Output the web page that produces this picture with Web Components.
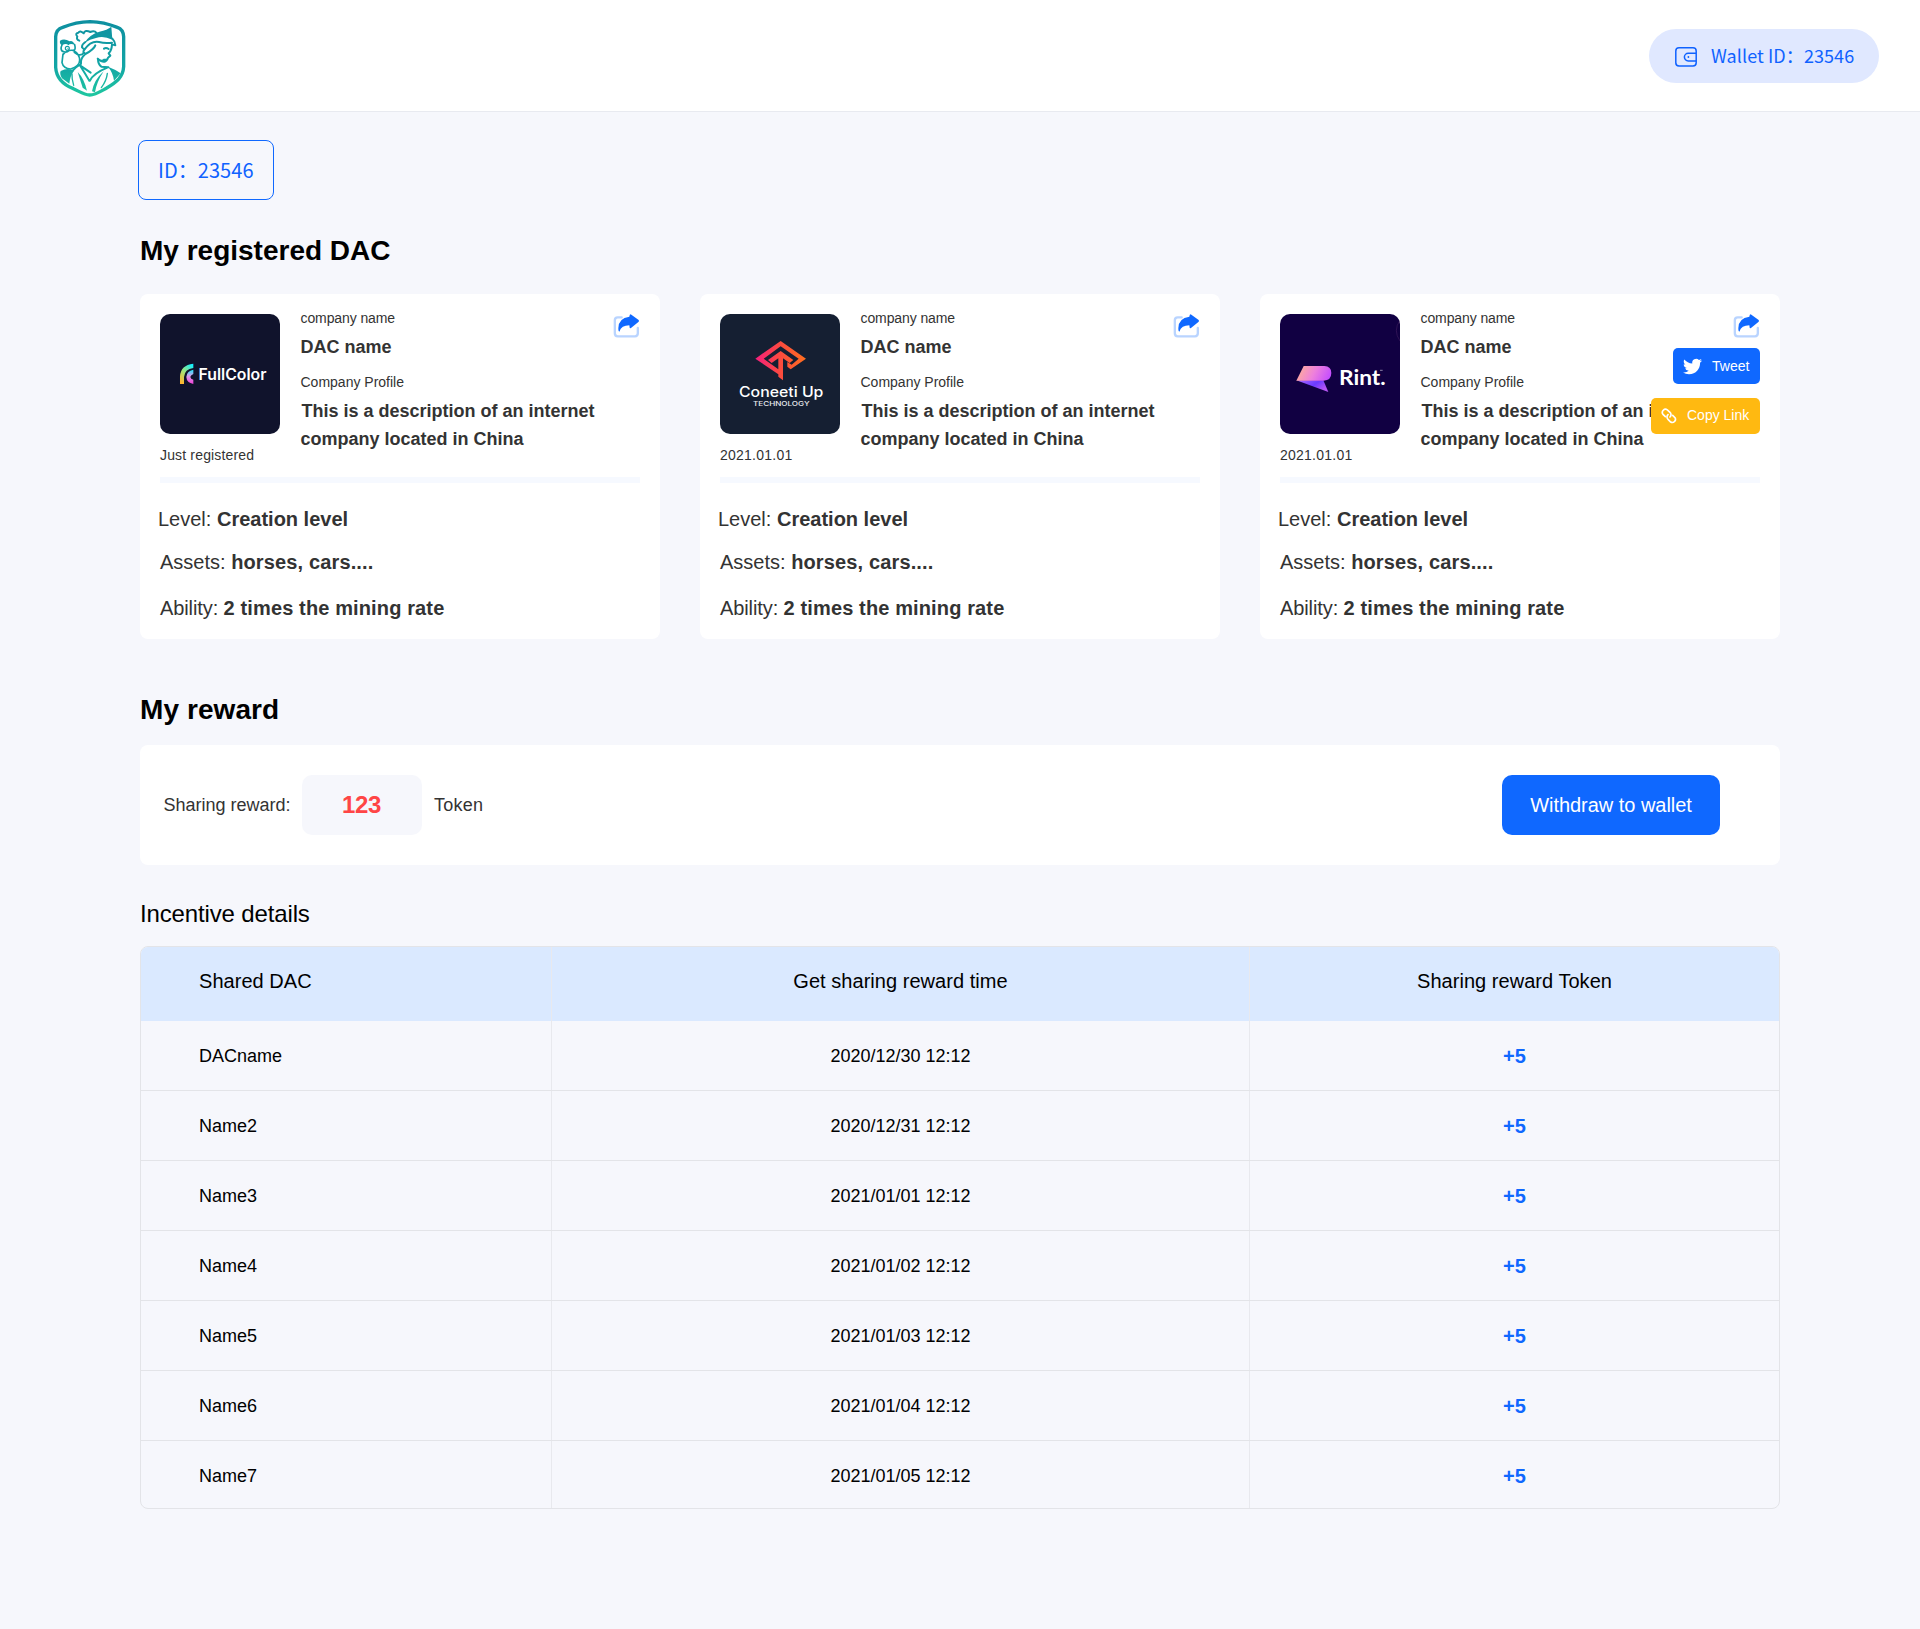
<!DOCTYPE html>
<html lang="en">
<head>
<meta charset="utf-8">
<title>DAC dashboard</title>
<style>
html,body{margin:0;background:#f6f7fc}
body{font-family:"Liberation Sans",Arial,sans-serif;color:#000;min-height:1629px}
</style>
</head>
<body>
<dac-app></dac-app>
<script>
function define(name, html, setup) {
  const t = document.createElement('template');
  customElements.define(name, class extends HTMLElement {
    connectedCallback() {
      if (this.shadowRoot) return;
      t.innerHTML = html;
      this.attachShadow({ mode: 'open' }).appendChild(t.content.cloneNode(true));
      if (setup) setup(this, this.shadowRoot);
    }
  });
}

define('crest-logo', `<style>:host{display:block;width:100px;height:95px}svg{display:block}</style>
<svg width="100" height="95" viewBox="0 0 300 285" fill="none" stroke="url(#g)" stroke-linejoin="round" stroke-linecap="round">
<defs><linearGradient id="g" gradientUnits="userSpaceOnUse" x1="150" y1="30" x2="150" y2="260"><stop offset="0" stop-color="#0e8fa0"/><stop offset=".6" stop-color="#12a5a5"/><stop offset="1" stop-color="#1fc8a0"/></linearGradient></defs>
<path stroke-width="10" d="M150 35Q108 36 68 52Q48 58 47 80V172C49 205 70 224 100 236C118 244 132 255 149 255C166 255 182 244 200 234C230 216 249 202 251 170V80Q250 58 232 52Q192 36 150 35Z"/>
<g stroke="none" fill="url(#g)">
<path d="M134 98Q148 74 178 65Q202 60 214 50L217 89Q190 76 168 84Q150 88 134 98Z"/>
<path d="M62 183Q84 172 102 182Q90 198 88 221L66 205Q58 192 62 183Z"/>
<path d="M204 170Q226 178 242 190L222 212Q219 188 204 170Z"/>
<path d="M60 92Q73 84 89 94Q98 90 105 105Q91 99 85 106Q79 98 66 106Q58 101 60 92Z"/>
<path d="M204 146Q196 160 188 156L172 146Q187 152 191 146Z"/>
<path d="M113 186Q132 205 141 242L128 233Z"/><path d="M156 244Q162 210 191 184Q170 216 165 247Z"/>
</g>
<path stroke-width="6" d="M136 96Q125 103 126 112L133 119Q153 91 177 96Q195 101 216 98M217 86Q226 95 226 106L216 103Q215 122 206 130L211 137L204 143Q201 153 194 155Q180 155 173 146M170 69Q163 60 151 66Q135 58 131 70Q120 60 115 68Q104 70 112 80Q108 88 118 92"/>
<path stroke-width="6" d="M133 119Q126 128 136 132Q162 118 166 106M136 132Q120 146 123 162Q106 172 98 182M174 148Q174 163 184 170L205 172M121 167L152 188M150 212Q160 190 202 173M121 168Q135 190 148 212M192 116Q198 112 206 117"/>
<path stroke-width="5" d="M66 105Q60 117 67 124M69 132L66 158Q70 176 92 177Q119 169 119 151Q119 132 99 121Q80 119 69 134M104 104Q108 119 101 121M67 123Q78 130 88 121M103 127Q120 142 133 128"/>
<circle cx="82" cy="115" r="6" stroke-width="3.500"/><circle cx="83" cy="115" r="1"/>
<path stroke-width="4" d="M202 190Q200 211 184 233M96 192Q95 206 101 226"/>
</svg>`);

define('wallet-pill', `<style>
:host{display:flex;box-sizing:border-box;width:230px;height:54px;border-radius:27px;background:#e0e8ff;color:#0f62ff;padding-left:26px;align-items:center;gap:14px;font:18px "Noto Sans CJK SC",sans-serif}
span{line-height:26px;padding-bottom:2px;white-space:nowrap;letter-spacing:.08px}svg{display:block;margin-top:1px}</style>
<svg width="22" height="20" viewBox="0 0 22 20" fill="none" stroke="currentColor" stroke-width="1.5"><rect x=".8" y=".8" width="20.4" height="18.2" rx="3.2"/><path d="M21 6.3H13.2a3.8 3.8 0 0 0 0 7.6H21"/><circle cx="13.4" cy="10" r=".9" fill="currentColor" stroke="none"/></svg>
<span><slot></slot></span>`);

define('app-header', `<style>:host{display:flex;box-sizing:border-box;height:112px;background:#fff;border-bottom:1px solid #e8eaf0;padding:10px 41px 0 40px;justify-content:space-between}
wallet-pill{margin-top:19px}</style><crest-logo></crest-logo><wallet-pill>Wallet ID：23546</wallet-pill>`);

define('id-badge', `<style>:host{display:flex;box-sizing:border-box;width:136px;height:60px;border:1px solid #0f68ff;border-radius:8px;align-items:center;padding:0 0 1px 19px;color:#0f62ff;font:20px/29px "Noto Sans CJK SC",sans-serif;letter-spacing:.06px;white-space:nowrap}</style><slot></slot>`);

const logos = {
full: `<rect width="120" height="120" rx="10" fill="#10132c"/>
<defs><linearGradient id="a" x1=".8" y1="0" x2=".2" y2="1"><stop offset="0" stop-color="#14f0ff"/><stop offset=".5" stop-color="#a2e57a"/><stop offset="1" stop-color="#ffb52e"/></linearGradient><linearGradient id="b" x1=".5" y1="0" x2=".5" y2="1"><stop offset="0" stop-color="#19eaff"/><stop offset=".45" stop-color="#d99ae8"/><stop offset="1" stop-color="#f03fd8"/></linearGradient></defs>
<g transform="scale(.3333) translate(-30 -27)"><path fill="url(#a)" d="M90 237V214Q92 180 130 176V189Q104 192 102 216V237Z"/><path fill="url(#b)" d="M130 194V207Q121 211 121 216Q122 222 130 224V237Q110 233 109 216Q110 198 130 194Z"/></g>
<text x="38.5" y="65.6" font-family="Inter" font-weight="600" font-size="15.4" textLength="68" lengthAdjust="spacingAndGlyphs" fill="#fff">FullColor</text>`,
coneeti: `<rect width="120" height="120" rx="10" fill="#151f32"/>
<defs><linearGradient id="c" gradientUnits="userSpaceOnUse" x1="136" y1="165" x2="288" y2="165"><stop offset="0" stop-color="#f51f7d"/><stop offset=".5" stop-color="#fb4b3e"/><stop offset="1" stop-color="#ff6f1f"/></linearGradient></defs>
<g transform="scale(.3333) translate(-30 -27)" fill="url(#c)"><path d="M136 161L212 108L288 161L242 193L232 185V171L245 179L266 161L212 124L161 161L205 193V160L185 174L174 165L212 138L250 165L239 174L219 160V226L205 215V208Z"/></g>
<text x="19" y="82.6" font-family="Inter" font-weight="500" font-size="14" textLength="84.4" lengthAdjust="spacingAndGlyphs" fill="#fff">Coneeti Up</text>
<text x="33" y="92.3" font-family="Inter" font-weight="500" font-size="6.3" textLength="56.6" lengthAdjust="spacingAndGlyphs" fill="#e8eaee">TECHNOLOGY</text>`,
rint: `<rect width="120" height="120" rx="10" fill="#110042"/>
<defs><linearGradient id="d" x1="0" y1=".4" x2="1" y2=".6"><stop offset="0" stop-color="#ffae98"/><stop offset=".5" stop-color="#ee80dc"/><stop offset="1" stop-color="#c44dff"/></linearGradient><linearGradient id="e" x1="0" y1="0" x2="1" y2=".5"><stop offset="0" stop-color="#b26cff"/><stop offset=".6" stop-color="#6a3bff"/><stop offset="1" stop-color="#b856f5"/></linearGradient></defs>
<g transform="scale(.3333) translate(-30 -27)"><path fill="url(#e)" d="M79 226H160L175 261Z"/><path fill="url(#d)" d="M101 183H163Q184 184 184 204Q184 226 161 227H79Z"/><path d="M390 46Q368 76 390 108" fill="none" stroke="#4c2468" stroke-width="1.5"/><path d="M330 196H338" stroke="#8d82a8" stroke-width="3"/></g>
<text x="59" y="71" font-family="Lato" font-weight="700" font-size="20.8" textLength="46.6" lengthAdjust="spacingAndGlyphs" fill="#fff">Rint.</text>`};
define('brand-tile', `<style>:host{display:block;width:120px;height:120px}svg{display:block}text{font-variant-ligatures:none}</style><svg width="120" height="120" viewBox="0 0 120 120"></svg>`,
 (el, r) => { r.querySelector('svg').innerHTML = logos[el.getAttribute('brand')]; });

define('share-icon', `<style>:host{display:block}svg{display:block}</style><svg width="26" height="24" viewBox="400 87 78 72"><path d="M426 97H414Q405.500 97 405.500 106V145Q405.500 154 414 154H466Q474.500 154 474.500 145V129" fill="none" stroke="#b9d4ff" stroke-width="7" stroke-linecap="round"/><path d="M453 88Q450 88 449 95Q416 99 416 130Q416 140 419 140Q425 121 449 121Q449 130 453 130L477 110Q479 107 476 104Z" fill="#0f68ff"/></svg>`);

define('share-button', `<style>:host{display:flex;box-sizing:border-box;height:36px;border-radius:5px;background:var(--bg);color:#fff;font-size:14px;line-height:16px;align-items:center;padding-left:10px;gap:10px;white-space:nowrap}
:host([kind=copy]) span{padding-bottom:2px}
svg{display:block;flex:none}span{display:block}</style><svg></svg><span><slot></slot></span>`, (el, r) => {
  const s = r.querySelector('svg');
  if (el.getAttribute('kind') === 'tweet') {
    s.setAttribute('viewBox', '0 0 24 24'); s.setAttribute('width', 19); s.setAttribute('height', 19);
    s.innerHTML = '<path fill="#fff" d="M23.95 4.57a10 10 0 0 1-2.82.77 4.96 4.96 0 0 0 2.16-2.72c-.95.55-2 .96-3.13 1.18a4.92 4.92 0 0 0-8.38 4.48C7.69 8.1 4.07 6.13 1.64 3.16a4.82 4.82 0 0 0-.67 2.48c0 1.71.87 3.21 2.19 4.1a4.9 4.9 0 0 1-2.23-.62v.06a4.92 4.92 0 0 0 3.95 4.83 5 5 0 0 1-2.21.08 4.94 4.94 0 0 0 4.6 3.42A9.87 9.87 0 0 1 0 19.54a13.99 13.99 0 0 0 7.55 2.21c9.05 0 14-7.5 14-13.98 0-.21 0-.42-.02-.63a9.94 9.94 0 0 0 2.46-2.55z"/>';
  } else {
    s.setAttribute('viewBox', '0 0 48 48'); s.setAttribute('width', 16); s.setAttribute('height', 16);
    s.innerHTML = '<g fill="none" stroke="#fff" stroke-width="5" stroke-linecap="round"><path d="M13 26L6 19A9.500 9.500 0 0 1 19 5.500L27 13A9.500 9.500 0 0 1 27 27"/><path d="M21 20A9.500 9.500 0 0 0 21 34L29 42A9.500 9.500 0 0 0 42 29L35 22"/></g>';
  }
});

define('share-menu', `<style>:host{display:flex;flex-direction:column;align-items:flex-end;gap:14px}
.t{--bg:#0f68ff;width:87px}.c{--bg:#ffb911;width:109px}</style>
<share-button class="t" kind="tweet">Tweet</share-button><share-button class="c" kind="copy">Copy Link</share-button>`);

define('dac-card', `<style>
:host{display:block;box-sizing:border-box;position:relative;width:520px;height:344.500px;background:#fff;border-radius:8px;padding:20px;color:#333}
.head{display:flex;gap:20px;height:163px}
.date{font-size:14px;line-height:20px;margin-top:11px;white-space:nowrap;letter-spacing:.16px}
:host([date^="2"]) .date{letter-spacing:.24px}
.info{flex:1;min-width:0;margin-top:-4px;padding-left:.5px}
.s{font-size:14px;line-height:16px}.cn{letter-spacing:-.1px}.n{font-size:18px;line-height:20px;font-weight:700;margin:11px 0 17px}
.d{font-size:18px;line-height:28px;font-weight:700;margin-top:7px;width:300px;text-indent:1px}
.div{height:6px;background:#f6f9ff}
.row{font-size:20px;line-height:22px}.l{margin:25px 0 0 -2px}.a{margin-top:21px}.b{margin-top:24px;letter-spacing:-.1px}
.a b{letter-spacing:.14px}.b b{letter-spacing:.13px}
share-icon{margin:0 .8px 0 auto;align-self:flex-start}
share-menu{position:absolute;right:20px;top:54px}
</style>
<div class="head"><div><brand-tile></brand-tile><div class="date"></div></div>
<div class="info"><div class="s cn">company name</div><div class="n">DAC name</div><div class="s">Company Profile</div><div class="d">This is a description of an internet company located in China</div></div><share-icon></share-icon></div>
<div class="div"></div>
<div class="row l">Level: <b>Creation level</b></div><div class="row a">Assets: <b>horses, cars....</b></div><div class="row b">Ability: <b>2 times the mining rate</b></div><slot></slot>`,
(el, r) => {
  r.querySelector('.date').textContent = el.getAttribute('date');
  const t = document.createElement('brand-tile'); t.setAttribute('brand', el.getAttribute('brand'));
  r.querySelector('brand-tile').replaceWith(t);
  if (el.hasAttribute('open')) r.appendChild(document.createElement('share-menu'));
});

define('reward-bar', `<style>
:host{display:flex;box-sizing:border-box;height:120px;background:#fff;border-radius:8px;align-items:center;padding:0 60px 0 23.500px;color:#333;font-size:18px;line-height:20px}
.lab{width:138.500px}.num{box-sizing:border-box;width:120px;height:60px;border-radius:10px;background:#f6f7fc;color:#ff4545;font-weight:700;font-size:24px;line-height:60px;text-align:center;margin-right:12px;padding-right:1px;letter-spacing:-.4px}
.tok{letter-spacing:.25px}
.btn{margin-left:auto;width:218px;height:60px;border-radius:10px;background:#0f68ff;color:#fff;font-size:20px;line-height:60px;text-align:center;letter-spacing:-.03px}</style>
<div class="lab">Sharing reward:</div><div class="num">123</div><div class="tok">Token</div><div class="btn">Withdraw to wallet</div>`);

define('incentive-row', `<style>
:host{display:grid;grid-template-columns:411px 698px 1fr;box-sizing:border-box;height:70px;border-bottom:1px solid #e3e4e8;font-size:18px;line-height:20px}
:host([last]){height:67px;border-bottom:0}
:host([head]){height:74px;border-bottom:0;background:#dae9ff;font-size:20px;line-height:22px;letter-spacing:.04px}
div{box-sizing:border-box;border-right:1px solid #e8e9ee;padding-top:25px;text-align:center}
.n{text-align:left;padding-left:58px}
.r{border-right:0;color:#0f68ff;font-size:20px;line-height:22px;font-weight:700;padding-top:24px}
:host([head]) div{padding-top:23px;color:#000;font-weight:400}
</style><div class="n"><slot name="n"></slot></div><div><slot name="t"></slot></div><div class="r"><slot name="r"></slot></div>`);

define('incentive-table', `<style>:host{display:block;box-sizing:border-box;border:1px solid #e3e4e8;border-radius:8px;overflow:hidden}</style>`, (el, r) => {
  const rows = [['Shared DAC','Get sharing reward time','Sharing reward Token'],
   ['DACname','2020/12/30 12:12','+5'],['Name2','2020/12/31 12:12','+5'],['Name3','2021/01/01 12:12','+5'],['Name4','2021/01/02 12:12','+5'],['Name5','2021/01/03 12:12','+5'],['Name6','2021/01/04 12:12','+5'],['Name7','2021/01/05 12:12','+5']];
  rows.forEach((c, i) => {
    const row = document.createElement('incentive-row');
    if (!i) row.setAttribute('head', '');
    if (i === rows.length - 1) row.setAttribute('last', '');
    row.innerHTML = `<span slot="n">${c[0]}</span><span slot="t">${c[1]}</span><span slot="r">${c[2]}</span>`;
    r.appendChild(row);
  });
});

define('dac-app', `<style>
:host{display:block}
main{display:flex;flex-direction:column;width:1640px;margin:0 auto;padding-top:28px}
id-badge{margin-left:-2px}
h2{margin:0;font-size:28px;line-height:32px;font-weight:700}
h3{margin:0;font-size:24px;line-height:28px;font-weight:400;letter-spacing:-.14px}
.h1{margin-top:35px}.cards{display:flex;gap:40px;margin-top:27px}
.h2{margin-top:55.500px;letter-spacing:.08px}reward-bar{margin-top:19px}h3{margin-top:35px}incentive-table{margin-top:18px}
</style>
<app-header></app-header>
<main><id-badge>ID：23546</id-badge><h2 class="h1">My registered DAC</h2>
<div class="cards"><dac-card brand="full" date="Just registered"></dac-card><dac-card brand="coneeti" date="2021.01.01"></dac-card><dac-card brand="rint" date="2021.01.01" open></dac-card></div>
<h2 class="h2">My reward</h2><reward-bar></reward-bar><h3>Incentive details</h3><incentive-table></incentive-table></main>`);
</script>
</body>
</html>
